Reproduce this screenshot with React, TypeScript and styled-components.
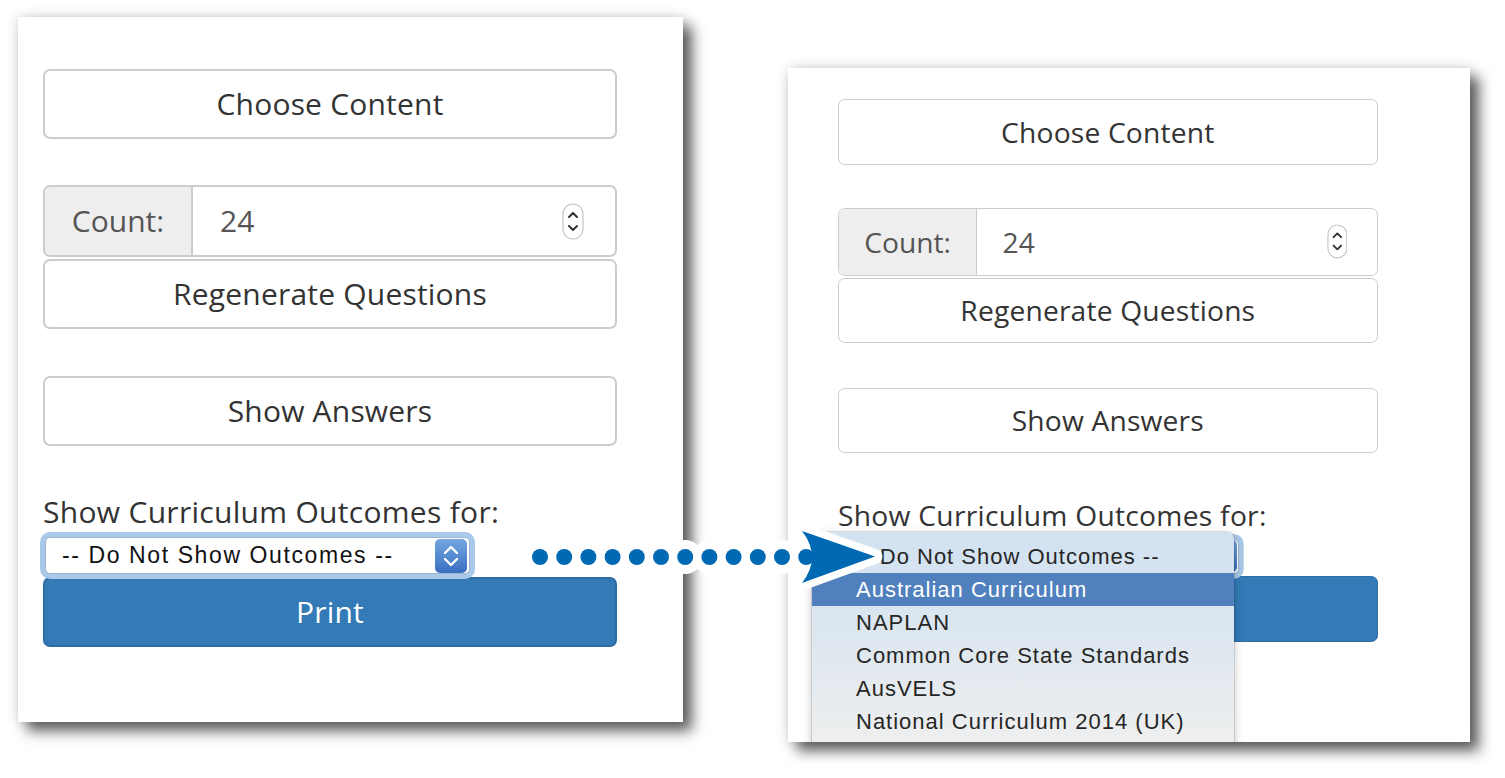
import React from "react";
import styled, { createGlobalStyle } from "styled-components";

const Global = createGlobalStyle`
  html, body { margin: 0; padding: 0; background: #fff; }
  body { width: 1505px; height: 778px; overflow: hidden; font-family: "Open Sans", sans-serif; }
`;

const Stage = styled.div`
  position: relative;
  width: 1505px;
  height: 778px;
  box-sizing: border-box;
  padding: 17px 0 0 18px;
  display: flex;
  align-items: flex-start;
  gap: 105px;
`;

const Panel = styled.section<{ $w: number; $h: number; $mt: number; $pt: number; $pl: number }>`
  position: relative;
  flex: none;
  box-sizing: border-box;
  width: ${(p) => p.$w}px;
  height: ${(p) => p.$h}px;
  margin-top: ${(p) => p.$mt}px;
  padding: ${(p) => p.$pt}px 0 0 ${(p) => p.$pl}px;
  background: #fff;
  overflow: hidden;
  box-shadow: 9px 9px 13px rgba(0, 0, 0, 0.62), 0 0 12px rgba(0, 0, 0, 0.16);
`;

const Form = styled.div<{ $zoom: number }>`
  zoom: ${(p) => p.$zoom};
  width: 574px;
  display: flex;
  flex-direction: column;
`;

const Btn = styled.button<{ $primary?: boolean; $mt?: number }>`
  display: flex;
  align-items: center;
  justify-content: center;
  flex: none;
  width: 100%;
  height: 70px;
  margin: ${(p) => p.$mt ?? 0}px 0 0;
  padding: 0;
  box-sizing: border-box;
  border: 2px solid ${(p) => (p.$primary ? "#2e6da4" : "#cccccc")};
  border-radius: 7px;
  background: ${(p) => (p.$primary ? "#337ab7" : "#ffffff")};
  color: ${(p) => (p.$primary ? "#ffffff" : "#333333")};
  font: 400 30px/1 "Open Sans", sans-serif;
  letter-spacing: 0.2px;
`;

const InputGroup = styled.div`
  display: flex;
  flex: none;
  height: 72px;
  margin-top: 46px;
  box-sizing: border-box;
  border: 2px solid #cccccc;
  border-radius: 7px;
  overflow: hidden;
`;

const Addon = styled.div`
  width: 146px;
  flex: none;
  display: flex;
  align-items: center;
  justify-content: center;
  background: #eeeeee;
  border-right: 2px solid #cccccc;
  color: #555555;
  font: 400 30px/1 "Open Sans", sans-serif;
`;

const NumberField = styled.div`
  flex: 1;
  display: flex;
  align-items: center;
  padding-left: 27px;
  color: #555555;
  font: 400 30px/1 "Open Sans", sans-serif;
`;

const Spinner = styled.svg`
  margin-left: auto;
  margin-right: 31px;
  flex: none;
`;

const Label = styled.div`
  margin-top: 44px;
  height: 43px;
  color: #333333;
  font: 400 30px/43px "Open Sans", sans-serif;
  letter-spacing: 0.3px;
  white-space: nowrap;
`;

const Select = styled.div`
  position: relative;
  flex: none;
  display: flex;
  align-items: center;
  width: 425px;
  height: 37px;
  margin: 4px 0 0 2px;
  box-sizing: border-box;
  padding-left: 16px;
  background: #fff;
  border: 1px solid #9fb4cc;
  border-radius: 5px;
  box-shadow: 0 0 0 5px #a9c9ea;
  color: #111;
  font: 400 23px/1 "Liberation Sans", Arial, sans-serif;
  letter-spacing: 1.6px;
  white-space: nowrap;
`;

const Stepper = styled.div`
  margin-left: auto;
  margin-right: 2px;
  width: 32px;
  height: 34px;
  flex: none;
  border-radius: 5px;
  background: linear-gradient(#74a8e0, #3a6ec0);
  display: flex;
  align-items: center;
  justify-content: center;
`;

const Menu = styled.div`
  position: absolute;
  left: 24px;
  top: 464px;
  width: 422px;
  height: 330px;
  box-sizing: border-box;
  padding-top: 8px;
  border-radius: 7px 7px 0 0;
  background: linear-gradient(#d2e2f1 0px, #dbe6f0 90px, #e6ebef 160px, #efefef 215px);
  box-shadow: 0 0 0 1px rgba(0, 0, 0, 0.1), 0 3px 10px rgba(0, 0, 0, 0.25);
  display: flex;
  flex-direction: column;
  z-index: 2;
`;

const MenuItem = styled.div<{ $active?: boolean }>`
  height: 33px;
  flex: none;
  display: flex;
  align-items: center;
  padding-left: 44px;
  background: ${(p) => (p.$active ? "#5080bd" : "transparent")};
  color: ${(p) => (p.$active ? "#ffffff" : "#262626")};
  font: 400 22px/1 "Liberation Sans", Arial, sans-serif;
  letter-spacing: 1px;
  white-space: nowrap;
`;

const ArrowLayer = styled.svg`
  position: absolute;
  left: 515px;
  top: 515px;
  z-index: 5;
  pointer-events: none;
`;

function SpinnerIcon() {
  return (
    <Spinner width="22" height="37" viewBox="0 0 22 37">
      <rect x="1" y="1" width="20" height="35" rx="10" fill="#fff" stroke="#c4c4c4" strokeWidth="1.2" />
      <path d="M7 14 L11 10 L15 14" fill="none" stroke="#333" strokeWidth="2" strokeLinecap="round" strokeLinejoin="round" />
      <path d="M7 23 L11 27 L15 23" fill="none" stroke="#333" strokeWidth="2" strokeLinecap="round" strokeLinejoin="round" />
    </Spinner>
  );
}

function StepperIcon() {
  return (
    <Stepper>
      <svg width="20" height="28" viewBox="0 0 20 28">
        <path d="M4 11 L10 5 L16 11" fill="none" stroke="#fff" strokeWidth="2.4" strokeLinecap="round" strokeLinejoin="round" />
        <path d="M4 17 L10 23 L16 17" fill="none" stroke="#fff" strokeWidth="2.4" strokeLinecap="round" strokeLinejoin="round" />
      </svg>
    </Stepper>
  );
}

function WorksheetForm({ zoom, showSelect }: { zoom: number; showSelect: boolean }) {
  return (
    <Form $zoom={zoom}>
      <Btn>Choose Content</Btn>
      <InputGroup>
        <Addon>Count:</Addon>
        <NumberField>
          24
          <SpinnerIcon />
        </NumberField>
      </InputGroup>
      <Btn $mt={2}>Regenerate Questions</Btn>
      <Btn $mt={47}>Show Answers</Btn>
      <Label>Show Curriculum Outcomes for:</Label>
      <Select>
        {showSelect ? "-- Do Not Show Outcomes --" : ""}
        <StepperIcon />
      </Select>
      <Btn $primary $mt={3}>
        Print
      </Btn>
    </Form>
  );
}

const options = [
  "-- Do Not Show Outcomes --",
  "Australian Curriculum",
  "NAPLAN",
  "Common Core State Standards",
  "AusVELS",
  "National Curriculum 2014 (UK)",
];

function Arrow() {
  const dots = Array.from({ length: 12 }, (_, i) => 540 + i * 24.2);
  const head = "M802 531 L875 556.5 L802 583 Q822 557 802 531 Z";
  return (
    <ArrowLayer width="380" height="85" viewBox="515 515 380 85">
      {dots.map((x) => (
        <circle key={"w" + x} cx={x} cy={557} r={8} fill="#fff" stroke="#fff" strokeWidth={18} />
      ))}
      <path d={head} fill="#fff" stroke="#fff" strokeWidth={15} strokeLinejoin="round" />
      {dots.map((x) => (
        <circle key={"b" + x} cx={x} cy={557} r={8} fill="#0069b4" />
      ))}
      <path d={head} fill="#0069b4" />
    </ArrowLayer>
  );
}

export default function App() {
  return (
    <>
      <Global />
      <Stage>
        <Panel $w={665} $h={705} $mt={0} $pt={52} $pl={25}>
          <WorksheetForm zoom={1} showSelect />
        </Panel>
        <Panel $w={682} $h={674} $mt={51} $pt={31} $pl={50}>
          <WorksheetForm zoom={0.94} showSelect={false} />
          <Menu>
            {options.map((o, i) => (
              <MenuItem key={o} $active={i === 1}>
                {o}
              </MenuItem>
            ))}
          </Menu>
        </Panel>
        <Arrow />
      </Stage>
    </>
  );
}
